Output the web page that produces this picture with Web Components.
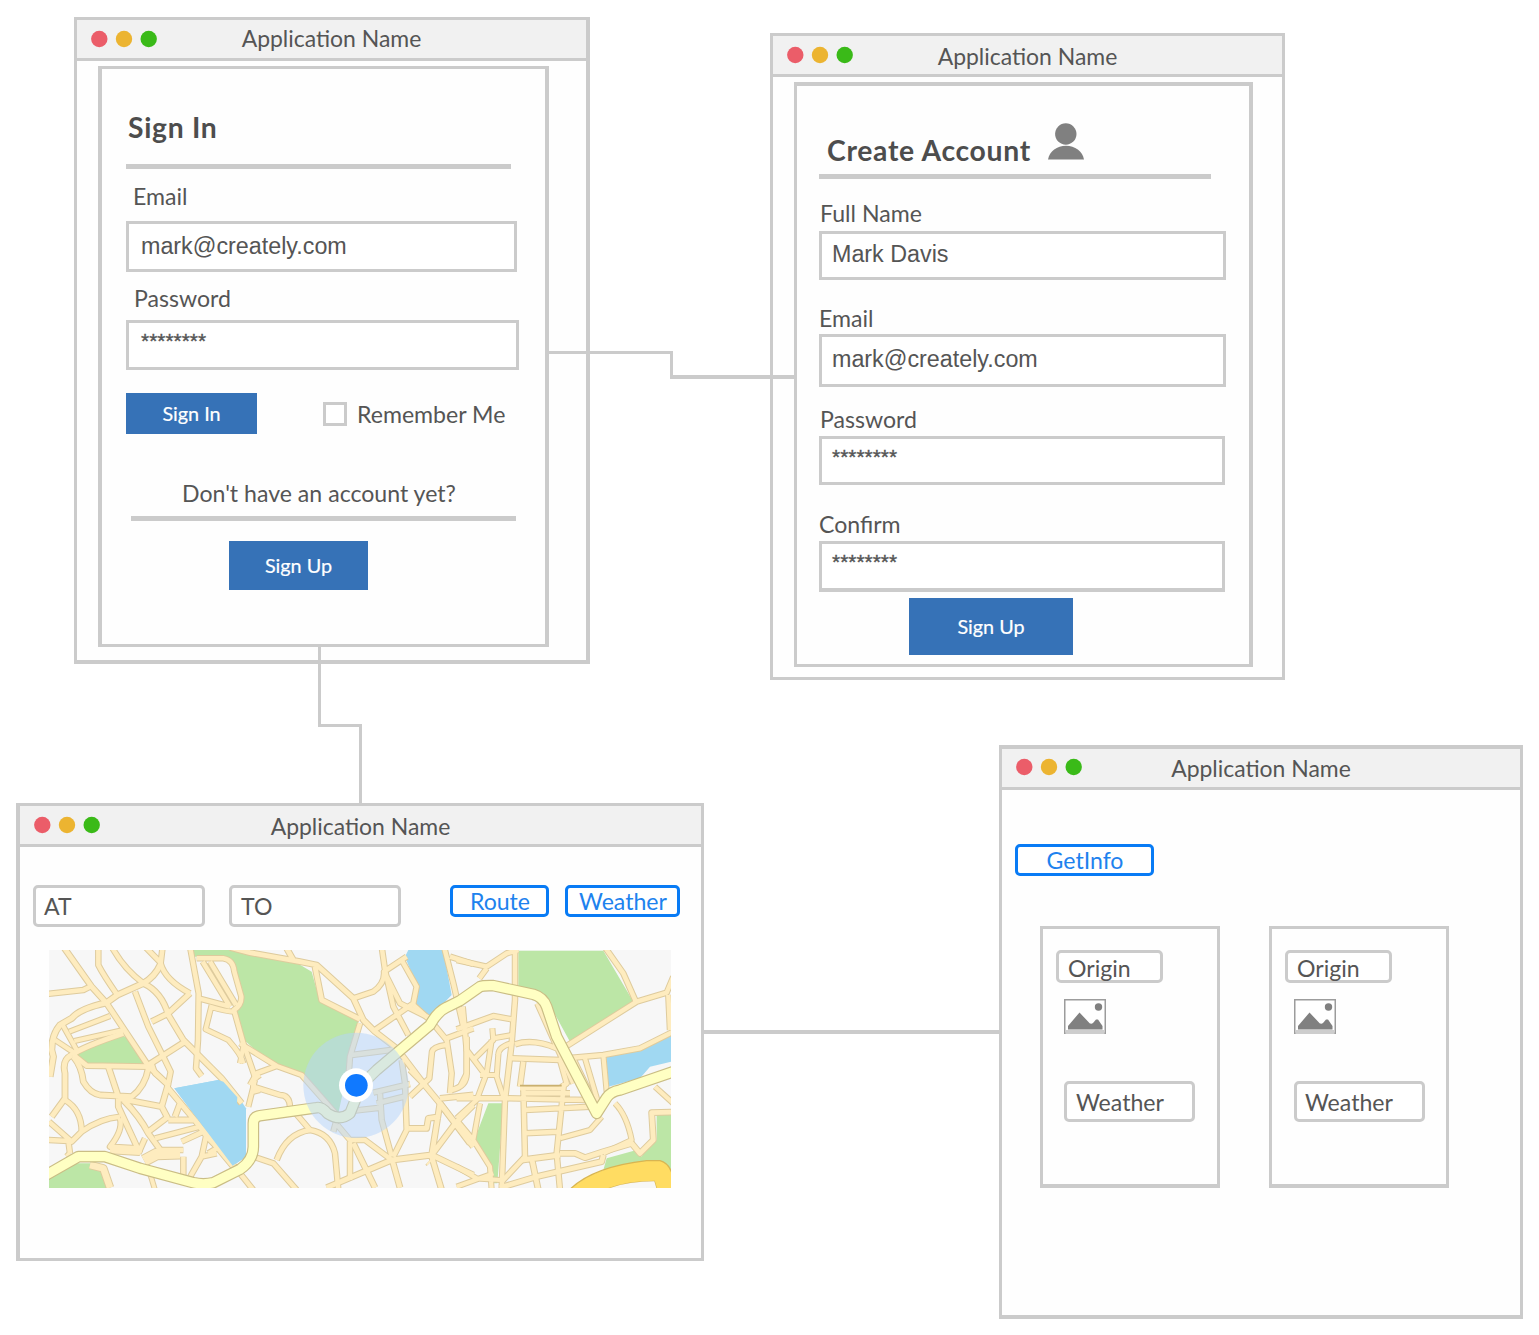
<!DOCTYPE html>
<html lang="en">
<head>
<meta charset="utf-8">
<title>Application wireframes</title>
<style>
  html, body { margin: 0; padding: 0; background: #fff; }
  body { width: 1539px; height: 1335px; overflow: hidden; font-family: Lato, "Liberation Sans", sans-serif; color: #555; }
</style>
</head>
<body>
<wf-board></wf-board>
<script>
const define = (name, html, after) => {
  const t = document.createElement('template');
  t.innerHTML = html;
  customElements.define(name, class extends HTMLElement {
    constructor() {
      super();
      this.attachShadow({ mode: 'open' }).appendChild(t.content.cloneNode(true));
      if (after) after(this.shadowRoot);
    }
  });
};

define('wf-dots', `
<style>:host{display:block;width:68px;height:18px}svg{display:block}</style>
<svg width="68" height="18" viewBox="0 0 68 18"><circle cx="9.300" cy="9" r="8.2" fill="#eb5d69"/><circle cx="34" cy="9" r="8.2" fill="#ecb431"/><circle cx="58.700" cy="9" r="8.2" fill="#3aba18"/></svg>`);

define('wf-window', `
<style>
:host{display:flex;flex-direction:column;box-sizing:border-box;border:3px solid #cbcbcb;background:#fefefe}
header{box-sizing:border-box;height:var(--bar,41px);flex:none;background:#f1f1f1;border-bottom:3px solid #cbcbcb;display:grid;align-items:start}
wf-dots{grid-area:1/1;margin:var(--dy,10px) 0 0 var(--dx,13px)}
.t{grid-area:1/1;font-size:22.95px;line-height:28px;text-align:center;margin-top:var(--ty,6px);white-space:nowrap}
.b{flex:1;display:flex;flex-direction:column;align-items:flex-start;min-height:0}
</style>
<header><wf-dots></wf-dots><div class="t"><slot name="title"></slot></div></header><div class="b"><slot></slot></div>`);

define('wf-panel', `
<style>:host{display:flex;flex-direction:column;align-items:flex-start;box-sizing:border-box;flex:none;border:3px solid #cbcbcb}</style><slot></slot>`);

define('wf-row', `<style>:host{display:flex;align-items:flex-start;flex:none}</style><slot></slot>`);

define('wf-rule', `<style>:host{display:block;flex:none;height:5px;background:#cbcbcb}</style>`);

define('wf-label', `
<style>:host{display:block;flex:none;font-size:23.1px;line-height:28px;height:28px;white-space:nowrap}
:host([heading]){font-size:28.3px;letter-spacing:.7px;font-weight:700;line-height:34px;height:34px;color:#4d4d4d}</style><slot></slot>`);

define('wf-input', `
<style>
:host{display:block;box-sizing:border-box;flex:none;border:3px solid #cbcbcb;background:#fff;font:23.3px/28px "Liberation Sans",Arial,sans-serif;white-space:nowrap;padding:var(--py,8px) 0 0 var(--px,12px)}
:host([secret]){font-size:20.9px;-webkit-text-stroke:.35px currentColor;--py:4px}
:host([round]){border-radius:5px;font-family:Lato,sans-serif;font-size:23.1px}
</style><slot></slot>`);

define('wf-button', `
<style>
:host{display:flex;align-items:center;justify-content:center;box-sizing:border-box;flex:none;background:#3672b7;color:#fff;font-size:19.8px;line-height:24px;white-space:nowrap;padding-bottom:2px;-webkit-text-stroke:.2px currentColor}
:host([outline]){background:#fff;border:3px solid #087bf5;border-radius:5px;color:#1e82ee;font-size:23.1px;line-height:26px;padding:0 0 0 1px;-webkit-text-stroke:0}
</style><span><slot></slot></span>`);

define('wf-check', `<style>:host{display:block;box-sizing:border-box;flex:none;width:24px;height:24px;border:3px solid #cbcbcb;background:#fff}</style>`);

define('wf-user', `
<style>:host{display:block;flex:none;width:36px;height:38px}svg{display:block}</style>
<svg width="36" height="38" viewBox="0 0 36 38"><circle cx="17.8" cy="11" r="10.7" fill="#808080"/><path d="M0 36.5C1.500 28 9 22.700 18 22.700S34.500 28 36 36.500Z" fill="#808080"/></svg>`);

define('wf-picture', `
<style>:host{display:block;flex:none;width:42px;height:35px}svg{display:block}</style>
<svg width="42" height="35" viewBox="0 0 42 35"><rect x=".75" y=".75" width="40.5" height="33.5" fill="#fff" stroke="#9c9c9c" stroke-width="1.5"/><path d="M1.500 31H40.500V35H1.500Z" fill="#cdcdcd"/><circle cx="34.500" cy="8" r="3.700" fill="#808080"/><path d="M4 30.500V27L15.500 13.500 24 22.500Q26.500 26 29 24L32 20.500H34L38.500 27V30.500Z" fill="#808080"/></svg>`);

// Street map. Each road: [x offset, width, path data].
const ROADS = [
 [0,15,'M70 20 155 140 200 190 260 280 325 378 385 435'],
 [0,14,'M20 162 130 150 150 140M175 20V75Q190 105 232 165M215 20Q250 85 310 130M315 20 362 68M368 20 362 70Q375 120 450 160'],
 [0,16,'M362 72Q345 110 310 130L232 165 200 188Q120 205 95 235L60 255Q35 285 35 330L40 350 30 410'],
 [0,14,'M450 20 476 160 474 300 468 385 485 408M285 155 325 260 370 350 392 395 385 430'],
 [0,15,'M310 130Q365 155 385 225L430 300 500 370 545 415 605 490M450 160 385 220 335 245M325 375 435 305'],
 [0,14,'M476 175 570 200M470 55H550Q580 60 583 95L604 170Q605 195 582 210L610 310 648 420M488 65 570 200M510 65 588 195'],
 [0,13,'M515 195 497 268 565 300Q605 345 610 370M582 215Q560 215 510 200M610 320 600 370M645 415 660 405M645 420 625 500M640 455 660 450'],
 [0,13,'M88 275 210 228M103 303 250 270M65 250 110 330M45 300 105 340M335 370 345 400 385 435'],
 [0,15,'M95 345Q130 320 250 280M95 345Q65 360 75 400V475L35 530M100 345 140 377 325 380'],
 [0,15,'M100 350Q125 380 130 425 150 460 180 465L275 470Q315 440 325 385M205 380 235 470 235 500 300 640'],
 [0,14,'M75 480Q125 510 125 575M27 545 95 605 125 575Q180 535 240 530M20 600 85 603 90 640'],
 [0,15,'M235 475 365 500 385 430M250 480Q300 530 325 580L365 635M380 440 460 535 580 680M365 500 382 532 325 575M385 540H465M405 530 420 490'],
 [0,14,'M240 535Q250 570 210 620L290 625M345 595 480 560M425 605 490 575M315 595 295 640M365 630 430 630'],
 [0,32,'M312 662 350 642 420 640'],
 [0,14,'M430 650V715M500 580 485 650 445 720M465 540 500 590 560 650 640 750M505 640 530 625M485 650 530 640M90 640 80 650'],
 [0,20,'M150 675 190 685 210 743M210 630 300 635'],[0,12,'M330 700 345 750'],
 [630,15,'M-60 22 0 38 150 65 200 75 310 175 340 240 375 275 440 325 520 430 570 490 670 620M110 25 130 60M195 80 215 180 330 238'],
 [630,14,'M310 175 370 155Q405 130 402 95L470 50M395 20 405 90 430 200 475 285M455 60 500 140 490 190 375 270M405 100 450 190 540 235'],
 [630,14,'M490 195 540 240 590 300M582 20 610 130 640 260M600 50 670 72M330 250 300 350 295 420M305 345 440 328'],
 [630,14,'M590 295 670 265M590 300 605 400 600 460M588 315Q550 320 546 335L538 415 480 470M605 450Q650 440 650 400V290M480 390 520 430'],
 [630,14,'M455 360 465 430 470 570 430 650M370 458 480 432M380 490 470 468M390 460 395 540 425 650M310 512 390 503'],
 [630,14,'M-30 310 80 378 155 405 265 530M80 378 20 400 0 435M10 415 10 440 90 465Q118 465 120 500M120 500 180 570Q240 580 255 640L265 750'],
 [630,14,'M180 570Q110 580 80 660M10 650 70 670 140 750M265 520 250 575M262 555 300 600H345L425 660M300 605V720'],
 [630,15,'M310 610 375 743M425 660 230 743M425 660 545 645 570 490M428 665 450 743M545 645 670 705M545 650 575 750M545 645 620 545 670 495M475 565H530L535 535 570 530M570 475 670 465M570 490 660 610'],
 [630,34,'M540 660 544 664'],
 [1260,14,'M-10 60 80 80 140 40 175 30M80 85 58 115M165 25V180L155 310 135 480 125 750M435 22 490 100 530 190M320 318 530 185 620 158 640 110M625 165 630 270'],
 [1260,14,'M-10 268 100 228 155 238M8 200 20 330 80 410M320 355 430 345 540 325 640 275M232 190 290 320 340 430M165 313Q220 295 290 325L320 350M155 355 300 360'],
 [1260,14,'M190 365 180 440M300 360 320 430 300 445M-10 475H140L380 480M195 460H330M190 440 195 650 125 725M195 510 390 500M195 580 295 575M312 430 290 640 300 750'],
 [1260,13,'M300 595 390 570 425 530M340 355 410 500M375 355 415 490M430 345 440 455M465 490Q500 525 515 600L430 640M180 445H310'],
 [1260,15,'M300 640H345L375 653 430 635 515 610 540 640 580 600 575 518 640 516M430 645 425 665 230 710 120 743M215 655 235 750M185 660 300 645'],
 [1260,13,'M97 265 100 300 40 360M100 295 155 285M155 310Q115 320 115 345L110 410 130 470M95 300 80 400 50 480-10 535M60 490 40 600 90 680 95 750M-10 540 40 600M-10 680 50 715 120 720M-10 740 100 700M60 405H115M585 440 640 490M20 330 20 400 0 440']
];
define('wf-map', `
<style>:host{display:block;flex:none;width:622px;height:238px}svg{display:block}</style>
<svg width="622" height="238" viewBox="27 30 1866 714" preserveAspectRatio="none">
<rect x="27" y="30" width="1866" height="714" fill="#f7f7f7"/>
<g fill="#bce6a6"><path d="M458 30H590L770 68 815 95 840 185 955 245 895 520 790 400 710 372 640 325 612 300 582 225 605 185 580 70 550 50H462Z"/><path d="M108 340 240 288 262 290 315 377H130Z"/><path d="M27 715 100 670H150L190 700 205 744H27Z"/><path d="M1435 32H1690L1780 185 1590 305 1510 160 1435 140Z"/><path d="M1345 490H1390L1372 730H1355L1345 670 1303 600Z"/><path d="M1850 525H1893V690H1690L1700 655 1790 630 1805 650 1820 620 1850 600Z"/></g>
<path d="M478 60H545Q573 62 575 90L597 170Q598 190 578 198L482 172Z" fill="#f7f7f7"/>
<g fill="#a0d8f2"><path d="M403 445 535 420 550 425 605 485 618 505V650L578 677Z"/><path d="M1105 30H1210L1235 165 1170 232 1122 190 1135 150 1095 50Z"/><path d="M1698 347 1800 330 1893 280V365L1830 380 1800 415 1705 440Z"/></g>
<g id="roads" fill="none" stroke-linejoin="round"></g>
<path d="M403 445 535 420 550 425 592 472 590 500 612 503 618 520V650L578 677Z" fill="#a0d8f2"/>
<path d="M1440 437H1565" stroke="#c9b06f" stroke-width="5"/>
<path d="M1590 748Q1660 680 1820 662H1860Q1885 668 1896 700V748H1850L1843 724Q1760 724 1700 748Z" fill="#ffdc62" stroke="#d8b552" stroke-width="4"/>
<path d="M1700 748Q1760 724 1843 724L1850 748Z" fill="#f7f7f7"/>
<g id="avenue" fill="none" stroke-linejoin="round"></g>
<circle cx="948" cy="436" r="158" fill="#b4d3fb" fill-opacity=".5"/><circle cx="948" cy="436" r="51" fill="#fff"/><circle cx="949" cy="436" r="34" fill="#1079ff"/>
</svg>`, root => {
  const draw = (extra, color) => ROADS.map(([x, w, d]) =>
    `<path transform="translate(${x})" d="${d}" stroke="${color}" stroke-width="${w + extra}"/>`).join('');
  root.getElementById('roads').innerHTML = draw(5.5, '#decb9d') + draw(-.5, '#feecbf');
  const avenue = 'M15 707 115 650H195L300 685 460 728Q490 735 520 728L600 688Q640 660 640 620V550Q640 530 660 527L830 503Q845 500 862 520 900 545 930 520L948 475Q965 430 1010 390L1170 255Q1192 215 1220 202L1260 182 1320 140Q1330 136 1360 137L1480 163Q1510 172 1520 200L1550 290 1670 520 1700 473Q1712 455 1740 450L1900 395';
  root.getElementById('avenue').innerHTML =
    `<path d="${avenue}" stroke="#cabd85" stroke-width="35"/><path d="${avenue}" stroke="#ffffc3" stroke-width="28"/>`;
});

define('wf-board', `
<style>
:host{display:block;position:relative;width:1539px;height:1335px;overflow:hidden}
wf-window{position:absolute}
svg{position:absolute;left:0;top:0;pointer-events:none}
#w1{left:74px;top:17px;width:516px;height:647px;border-right-width:4px;border-bottom-width:4px;--ty:4px}
#w2{left:770px;top:33px;width:515px;height:647px}
#w3{left:16px;top:803px;width:688px;height:458px;border-left-width:4px}
#w4{left:999px;top:745px;width:524px;height:574px;border-top-width:4px;border-bottom-width:4px;--dx:13px;--dy:9px;--ty:5px}
</style>
<wf-window id="w1"><span slot="title">Application Name</span>
 <wf-panel style="margin:5px 0 0 21px;width:451px;height:581px;border-left-width:4px;border-right-width:4px">
  <wf-label heading style="margin:41px 0 0 26px">Sign In</wf-label>
  <wf-rule style="margin:20px 0 0 24px;width:385px"></wf-rule>
  <wf-label style="margin:13px 0 0 31px">Email</wf-label>
  <wf-input style="margin:11px 0 0 24px;width:391px;height:51px">mark@creately.com</wf-input>
  <wf-label style="margin:12px 0 0 32px">Password</wf-label>
  <wf-input secret style="margin:8px 0 0 24px;width:393px;height:50px">********</wf-input>
  <wf-row style="margin:23px 0 0 24px">
   <wf-button style="width:131px;height:41px">Sign In</wf-button>
   <wf-check style="margin:9px 0 0 66px"></wf-check>
   <wf-label style="margin:7px 0 0 10px">Remember Me</wf-label>
  </wf-row>
  <wf-label style="margin:45px 0 0 80px">Don't have an account yet?</wf-label>
  <wf-rule style="margin:9px 0 0 29px;width:385px"></wf-rule>
  <wf-button style="margin:20px 0 0 127px;width:139px;height:49px">Sign Up</wf-button>
 </wf-panel>
</wf-window>
<wf-window id="w2"><span slot="title">Application Name</span>
 <wf-panel style="margin:5px 0 0 21px;width:459px;height:585px;border-top-width:4px;border-right-width:4px">
  <wf-row style="margin:37px 0 0 30px">
   <wf-label heading style="margin-top:10px;width:221px">Create Account</wf-label>
   <wf-user></wf-user>
  </wf-row>
  <wf-rule style="margin:7px 0 0 22px;width:392px"></wf-rule>
  <wf-label style="margin:20px 0 0 23px">Full Name</wf-label>
  <wf-input style="--py:6px;--px:10px;margin:4px 0 0 22px;width:407px;height:49px">Mark Davis</wf-input>
  <wf-label style="margin:24px 0 0 22px">Email</wf-label>
  <wf-input style="--px:10px;margin:2px 0 0 22px;width:407px;height:53px">mark@creately.com</wf-input>
  <wf-label style="margin:18px 0 0 23px">Password</wf-label>
  <wf-input secret style="--px:10px;margin:3px 0 0 22px;width:406px;height:49px">********</wf-input>
  <wf-label style="margin:25px 0 0 22px">Confirm</wf-label>
  <wf-input secret style="--px:10px;margin:3px 0 0 22px;width:406px;height:51px;border-bottom-width:4px">********</wf-input>
  <wf-button style="margin:6px 0 0 112px;width:164px;height:57px">Sign Up</wf-button>
 </wf-panel>
</wf-window>
<wf-window id="w3"><span slot="title">Application Name</span>
 <wf-row style="margin:38px 0 0 13px">
  <wf-input round style="--py:4px;--px:8px;width:172px;height:42px">AT</wf-input>
  <wf-input round style="--py:4px;--px:9px;margin-left:24px;width:172px;height:42px">TO</wf-input>
  <wf-button outline style="margin-left:49px;width:99px;height:32px">Route</wf-button>
  <wf-button outline style="margin-left:16px;width:115px;height:32px">Weather</wf-button>
 </wf-row>
 <wf-map style="margin:23px 0 0 29px"></wf-map>
</wf-window>
<wf-window id="w4"><span slot="title">Application Name</span>
 <wf-button outline style="margin:54px 0 0 13px;width:139px;height:32px">GetInfo</wf-button>
 <wf-row style="margin:50px 0 0 38px;gap:49px">
  <wf-panel style="width:180px;height:262px;border-bottom-width:4px">
   <wf-input round style="--py:1px;--px:9px;margin:21px 0 0 13px;width:107px;height:33px">Origin</wf-input>
   <wf-picture style="margin:16px 0 0 21px"></wf-picture>
   <wf-input round style="--py:4px;--px:9px;margin:47px 0 0 21px;width:131px;height:41px">Weather</wf-input>
  </wf-panel>
  <wf-panel style="width:180px;height:262px;border-bottom-width:4px">
   <wf-input round style="--py:1px;--px:9px;margin:21px 0 0 13px;width:107px;height:33px">Origin</wf-input>
   <wf-picture style="margin:16px 0 0 22px"></wf-picture>
   <wf-input round style="--py:4px;--px:8px;margin:47px 0 0 22px;width:131px;height:41px">Weather</wf-input>
  </wf-panel>
 </wf-row>
</wf-window>
<svg width="1539" height="1335" fill="none" stroke="#cbcbcb" stroke-width="3"><path d="M549 352.500H671.500V378.500"/><path d="M670 377H795M703 1032H1000" stroke-width="4"/><path d="M319.500 646V725.500H360.500V803"/></svg>`);
</script>
</body>
</html>
